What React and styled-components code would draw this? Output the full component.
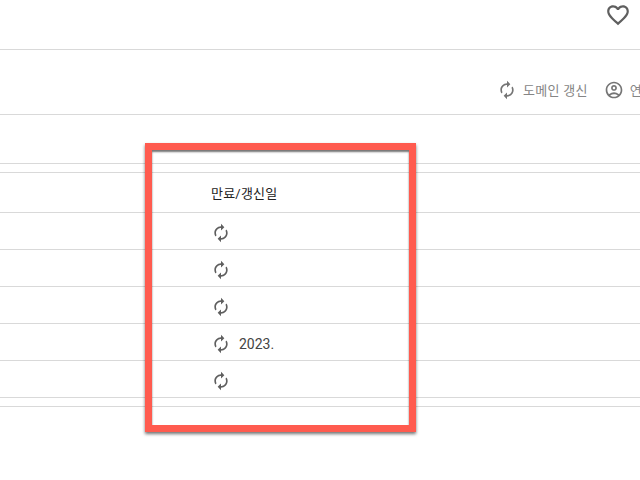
import React from 'react';
import styled, { createGlobalStyle } from 'styled-components';
import { MdFavoriteBorder, MdSync, MdOutlineAccountCircle } from 'react-icons/md';

const Global = createGlobalStyle`
  html, body { margin: 0; padding: 0; background: #fff; overflow: hidden; }
  body { font-family: Roboto, "Noto Sans CJK KR", sans-serif; width: 640px; height: 480px; }
`;
const Page = styled.div`
  position: relative;
  width: 640px;
  height: 480px;
  overflow: hidden;
`;
const TopBar = styled.header`
  height: 49px;
  border-bottom: 1px solid #d9d9d9;
  display: flex;
  justify-content: flex-end;
`;
const HeartButton = styled.div`
  display: flex;
  color: #5f5f5f;
  padding: 2px 9px 0 0;
  height: 26px;
`;
const Toolbar = styled.div`
  height: 65px;
  border-bottom: 1px solid #d9d9d9;
  display: flex;
  align-items: center;
  padding: 15px 0 0 497px;
  box-sizing: border-box;
  white-space: nowrap;
`;
const ToolItem = styled.div`
  display: flex;
  align-items: center;
  gap: 6px;
  flex: none;
  margin-right: 16px;
  font-size: 13px;
  letter-spacing: 0.3px;
  color: #858585;
`;
const SyncGlyph = styled(MdSync)`
  color: ${(p) => p.$tone};
  flex: none;
  transform: scaleX(-1);
`;
const Table = styled.div`
  margin-top: 48px;
  border-top: 1px solid #d9d9d9;
`;
const FilterRow = styled.div`
  height: 8px;
  border-bottom: 1px solid #d9d9d9;
`;
const HeaderRow = styled.div`
  height: 39px;
  border-bottom: 1px solid #d9d9d9;
  display: flex;
  align-items: center;
  padding-left: 211px;
  font-size: 13px;
  letter-spacing: 0.2px;
  color: #222;
`;
const Row = styled.div`
  box-sizing: border-box;
  height: 37px;
  border-bottom: 1px solid #d9d9d9;
  display: flex;
  align-items: center;
  gap: 8px;
  padding: 3px 0 0 211px;
  font-size: 14px;
  color: #444;
`;
const FooterRow = styled.div`
  height: 8px;
  border-bottom: 1px solid #d9d9d9;
`;
const Highlight = styled.div`
  position: absolute;
  left: 145px;
  top: 143px;
  width: 271px;
  height: 289px;
  box-sizing: border-box;
  border: 7px solid #ff5b4f;
  box-shadow: 0 2px 3px rgba(0, 0, 0, 0.55), inset 0 2px 2px rgba(0, 0, 0, 0.55);
  pointer-events: none;
`;

const rows = ['', '', '', '2023.', ''];

export default function App() {
  return (
    <Page>
      <Global />
      <TopBar>
        <HeartButton><MdFavoriteBorder size={26} /></HeartButton>
      </TopBar>
      <Toolbar>
        <ToolItem><SyncGlyph size={20} $tone="#757575" />도메인 갱신</ToolItem>
        <ToolItem><MdOutlineAccountCircle size={20} color="#757575" />연</ToolItem>
      </Toolbar>
      <Table>
        <FilterRow />
        <HeaderRow>만료/갱신일</HeaderRow>
        {rows.map((text, i) => (
          <Row key={i}>
            <SyncGlyph size={20} $tone="#5f5f5f" />
            {text}
          </Row>
        ))}
        <FooterRow />
      </Table>
      <Highlight />
    </Page>
  );
}
